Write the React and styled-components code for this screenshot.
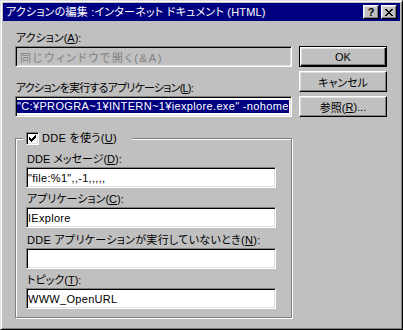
import React from 'react';
import styled, { createGlobalStyle, css } from 'styled-components';

const Global = createGlobalStyle`
  html, body { margin: 0; padding: 0; background: #c0c0c0; }
  body {
    font-family: "Liberation Sans", "Noto Sans CJK JP", sans-serif;
    font-size: 11px;
    font-feature-settings: "palt";
    color: #000;
  }
  * { box-sizing: border-box; }
`;

const Window = styled.div`
  width: 403px;
  height: 330px;
  background: #c0c0c0;
  border: 1px solid;
  border-color: #dfdfdf #000 #000 #dfdfdf;
  box-shadow: inset 1px 1px 0 #fff, inset -1px -1px 0 #808080;
  padding: 2px;
  display: flex;
  flex-direction: column;
`;

const TitleBar = styled.div`
  height: 18px;
  background: #000080;
  color: #fff;
  display: flex;
  align-items: center;
  padding: 0 3px 0 3px;
`;

const Title = styled.div`
  flex: 1;
  white-space: nowrap;
  line-height: 18px;
  font-size: 11px;
  letter-spacing: 0.2px;
`;

const CapButton = styled.div`
  width: 16px;
  height: 14px;
  margin-left: ${(p) => p.$gap || 0}px;
  background: #c0c0c0;
  border: 1px solid;
  border-color: #fff #000 #000 #fff;
  box-shadow: inset -1px -1px 0 #808080, inset 1px 1px 0 #dfdfdf;
  display: flex;
  align-items: center;
  justify-content: center;
  color: #000;
  font: bold 11px "Liberation Sans", sans-serif;
  line-height: 12px;
`;

const Body = styled.div`
  display: flex;
  gap: 7px;
  padding: 11px 13px 0 12px;
`;

const Left = styled.div`
  width: 277px;
  display: flex;
  flex-direction: column;
`;

const Right = styled.div`
  width: 88px;
  display: flex;
  flex-direction: column;
  gap: 4px;
  padding-top: 14px;
`;

const Label = styled.div`
  height: 13px;
  line-height: 13px;
  margin-top: ${(p) => p.$mt || 0}px;
  margin-bottom: 1px;
  padding-left: 1px;
  white-space: nowrap;
  letter-spacing: ${(p) => p.$ls ?? 0}px;
`;

const U = styled.span`
  text-decoration: underline;
`;

const Field = styled.div`
  height: 21px;
  width: 100%;
  background: ${(p) => (p.$disabled ? '#c0c0c0' : '#fff')};
  color: ${(p) => (p.$disabled ? '#808080' : '#000')};
  border: 1px solid;
  border-color: #808080 #fff #fff #808080;
  box-shadow: inset 1px 1px 0 #000, inset -1px -1px 0 #dfdfdf;
  padding: 0 2px 0 ${(p) => p.$pad ?? 1}px;
  display: flex;
  align-items: center;
  white-space: nowrap;
  overflow: hidden;
  letter-spacing: ${(p) => p.$ls ?? 0.3}px;
`;

const Selected = styled.span`
  background: #000080;
  color: #fff;
  line-height: 13px;
  display: inline-block;
  letter-spacing: 0.35px;
`;

const Group = styled.fieldset`
  margin: 15px 0 0;
  width: 277px;
  min-inline-size: 0;
  padding: 8px 15px 8px 10px;
  border: 1px solid #808080;
  box-shadow: inset 1px 1px 0 #fff, 1px 1px 0 #fff;
  display: flex;
  flex-direction: column;
`;

const Legend = styled.legend`
  margin-left: -3px;
  padding: 0 15px 0 3px;
  height: 13px;
  background: #c0c0c0;
  display: flex;
  align-items: center;
  gap: 3px;
  white-space: nowrap;
  line-height: 13px;
  letter-spacing: 0.3px;
`;

const CheckBox = styled.span`
  width: 13px;
  height: 13px;
  background: #fff;
  border: 1px solid;
  border-color: #808080 #fff #fff #808080;
  box-shadow: inset 1px 1px 0 #000, inset -1px -1px 0 #dfdfdf;
  display: flex;
  align-items: center;
  justify-content: center;
`;

const Button = styled.div`
  width: 88px;
  height: 21px;
  background: #c0c0c0;
  display: flex;
  align-items: center;
  justify-content: center;
  white-space: nowrap;
  border: 1px solid;
  ${(p) =>
    p.$default
      ? css`
          border-color: #000;
          box-shadow: inset 1px 1px 0 #fff, inset -1px -1px 0 #000,
            inset -2px -2px 0 #808080, inset 2px 2px 0 #dfdfdf;
        `
      : css`
          border-color: #fff #000 #000 #fff;
          box-shadow: inset -1px -1px 0 #808080, inset 1px 1px 0 #dfdfdf;
        `}
`;

const checkCols = [
  [0, 2], [1, 3], [2, 4], [3, 3], [4, 2], [5, 1], [6, 0],
];

function CheckMark() {
  return (
    <svg width="7" height="7" viewBox="0 0 7 7" shapeRendering="crispEdges">
      {checkCols.map(([x, y]) => (
        <rect key={x} x={x} y={y} width="1" height="3" fill="#000" />
      ))}
    </svg>
  );
}

function CloseGlyph() {
  return (
    <svg width="8" height="7" viewBox="0 0 8 7" shapeRendering="crispEdges">
      {[0, 1, 2, 3, 4, 5, 6].map((i) => (
        <g key={i}>
          <rect x={i} y={i} width="2" height="1" fill="#000" />
          <rect x={6 - i} y={i} width="2" height="1" fill="#000" />
        </g>
      ))}
    </svg>
  );
}

export default function App() {
  return (
    <>
      <Global />
      <Window>
        <TitleBar>
          <Title>アクションの編集 :インターネット ドキュメント (HTML)</Title>
          <CapButton>?</CapButton>
          <CapButton $gap={2}>
            <CloseGlyph />
          </CapButton>
        </TitleBar>
        <Body>
          <Left>
            <Label>
              アクション(<U>A</U>):
            </Label>
            <Field $disabled $pad={4} $ls={1.8}>同じウィンドウで開く(&amp;A)</Field>
            <Label $mt={15} $ls={-0.8}>
              アクションを実行するアプリケーション(<U>L</U>):
            </Label>
            <Field>
              <Selected>"C:¥PROGRA~1¥INTERN~1¥iexplore.exe" -nohome</Selected>
            </Field>
            <Group>
              <Legend>
                <CheckBox>
                  <CheckMark />
                </CheckBox>
                <span>
                  DDE を使う(<U>U</U>)
                </span>
              </Legend>
              <Label $ls={0}>
                DDE メッセージ(<U>D</U>):
              </Label>
              <Field>"file:%1",,-1,,,,,</Field>
              <Label $mt={5}>
                アプリケーション(<U>C</U>):
              </Label>
              <Field>IExplore</Field>
              <Label $mt={6} $ls={0.3}>
                DDE アプリケーションが実行していないとき(<U>N</U>):
              </Label>
              <Field></Field>
              <Label $mt={5}>
                トピック(<U>T</U>):
              </Label>
              <Field>WWW_OpenURL</Field>
            </Group>
          </Left>
          <Right>
            <Button $default>OK</Button>
            <Button>キャンセル</Button>
            <Button>
              参照(<U>R</U>)...
            </Button>
          </Right>
        </Body>
      </Window>
    </>
  );
}
